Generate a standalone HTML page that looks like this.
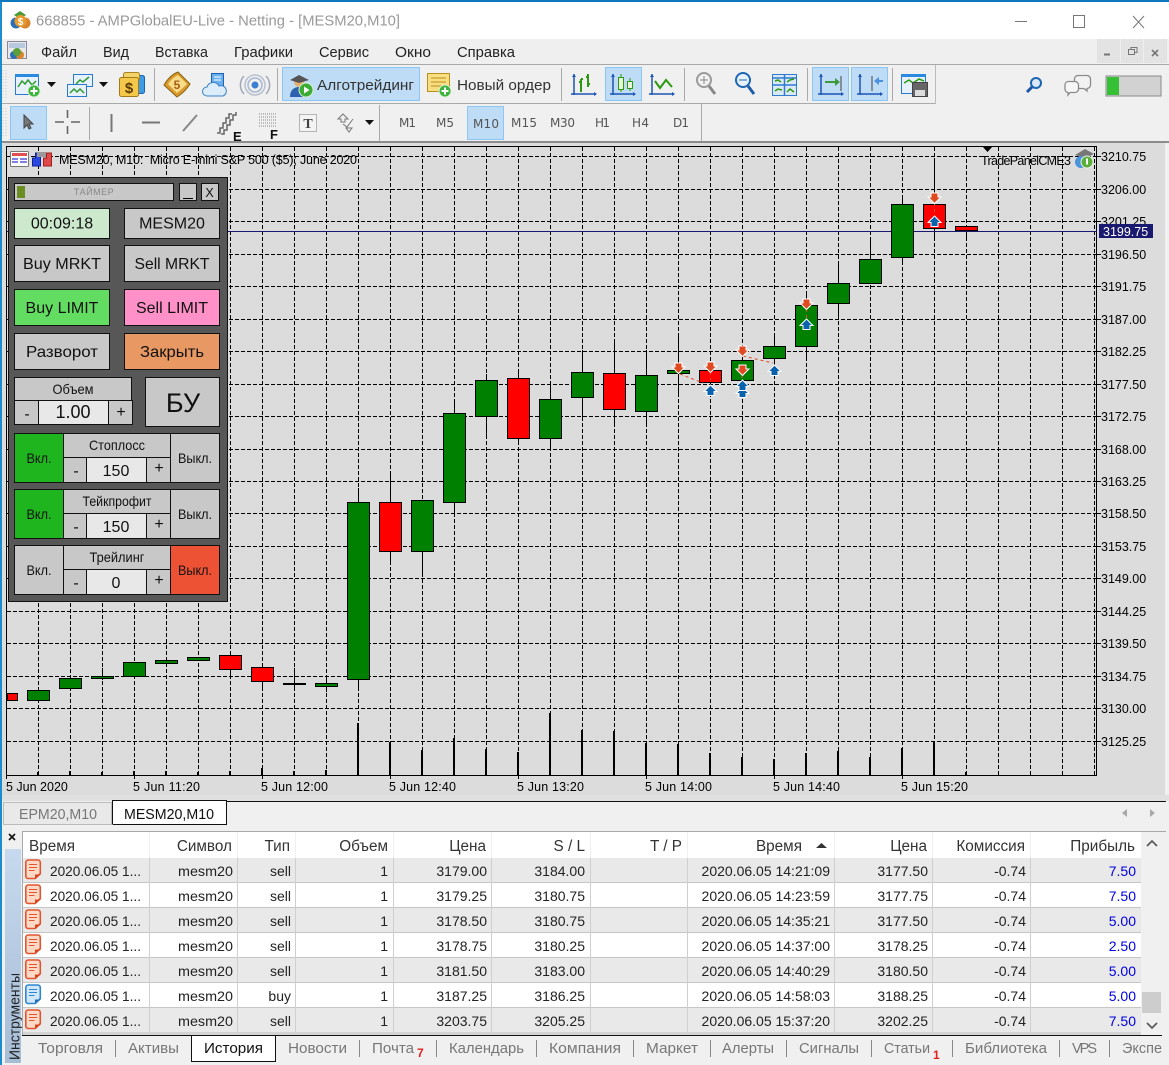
<!DOCTYPE html>
<html><head><meta charset="utf-8"><title>MetaTrader</title>
<style>
html,body{margin:0;padding:0;background:#f0f0f0}
svg{display:block;font-family:"Liberation Sans","Noto Sans CJK SC",sans-serif}
.m{font-size:15px;fill:#222}
.tb{font-size:15px;fill:#333}
.tf{font-family:"DejaVu Sans",sans-serif;font-size:12px;fill:#555}
.ax{font-size:12.5px;fill:#000}
.t{font-size:14px;fill:#222}
.e{text-anchor:end}
.b{fill:#0000e0}
.h{font-size:15.3px;fill:#333}
.bt{font-size:14.5px;fill:#777}
.c{text-anchor:middle;fill:#111}
.p16{font-size:16px}.p14{font-size:14px}
</style></head><body>
<svg width="1169" height="1065" viewBox="0 0 1169 1065" xmlns="http://www.w3.org/2000/svg">
<defs>
<linearGradient id="tool" x1="0" y1="0" x2="0" y2="1"><stop offset="0" stop-color="#c6d9ee"/><stop offset="1" stop-color="#a6bdd6"/></linearGradient>
<g id="ds"><path d="M.8 3.5a2.500 2.500 0 0 1 2.500-2.500h9.500a2.500 2.500 0 0 1 2.500 2.500v11l-5 5H3.300a2.500 2.500 0 0 1-2.500-2.500z" fill="#ffd9c6" stroke="#e0552f" stroke-width="1.600"/><path d="M4 5.500h8M4 8.500h8M4 11.500h5.500" stroke="#e0552f" fill="none"/><path d="M10 19.500v-4h6z" fill="#d8431d"/></g>
<g id="db"><path d="M.8 3.500a2.500 2.500 0 0 1 2.500-2.500h9.500a2.500 2.500 0 0 1 2.500 2.500v11l-5 5H3.300a2.500 2.500 0 0 1-2.500-2.500z" fill="#cfe6fb" stroke="#2f86d0" stroke-width="1.600"/><path d="M4 5.500h8M4 8.500h8M4 11.500h5.500" stroke="#2f86d0" fill="none"/><path d="M10 19.500v-4h6z" fill="#1d6fc0"/></g>
<path id="ad" d="M-3.500 0H3.500V4H6.500L0 10.500L-6.500 4H-3.500Z" fill="#e04a22" stroke="#fff"/>
<path id="au" d="M-3.500 10.500H3.500V6.500H6.500L0 0L-6.500 6.500H-3.500Z" fill="#0a62ad" stroke="#fff"/>
<g id="plus"><circle r="6" fill="#3cb43c" stroke="#d8f0d8"/><path d="M-3.500 0H3.500M0-3.500V3.500" stroke="#fff" stroke-width="2"/></g>
</defs>

<rect width="1169" height="1065" fill="#f0f0f0"/>
<rect y="2" width="1169" height="37" fill="#fff"/>
<rect width="1169" height="2" fill="#0f78bd"/>

<!-- title -->
<g transform="translate(11,11)"><circle cx="5" cy="12" r="5.500" fill="#2c6fb5"/><circle cx="14" cy="12" r="5.500" fill="#d8842c"/><path d="M3 4 9 0l6 4-6 4z" fill="#4a9a3c"/><circle cx="9.500" cy="10" r="6" fill="#e89a2c"/><text x="9.500" y="14" font-size="10" font-weight="bold" fill="#fff" text-anchor="middle">$</text></g>
<text x="36" y="25.500" font-size="15" fill="#999" textLength="364" lengthAdjust="spacingAndGlyphs">668855 - AMPGlobalEU-Live - Netting - [MESM20,M10]</text>
<path d="M1015 21.500H1027" stroke="#777"/>
<rect x="1073.500" y="15.500" width="11" height="12" fill="none" stroke="#777"/>
<path d="M1133 16L1144 28M1144 16L1133 28" stroke="#777"/>

<!-- menu -->
<rect y="39" width="1169" height="26" fill="#efefef"/>
<g transform="translate(7,41)"><rect x=".5" y=".5" width="19" height="17" fill="#e8e8e8" stroke="#889"/><rect x="2" y="2" width="16" height="5" fill="#b8c8e0"/><circle cx="7" cy="14" r="4" fill="#2c6fb5"/><circle cx="13" cy="14" r="4" fill="#d8842c"/><circle cx="10" cy="11" r="4" fill="#5aa03c"/></g>
<g class="m">
<text x="41" y="57" textLength="36" lengthAdjust="spacingAndGlyphs">Файл</text>
<text x="103" y="57" textLength="26" lengthAdjust="spacingAndGlyphs">Вид</text>
<text x="155" y="57" textLength="53" lengthAdjust="spacingAndGlyphs">Вставка</text>
<text x="234" y="57" textLength="59" lengthAdjust="spacingAndGlyphs">Графики</text>
<text x="319" y="57" textLength="50" lengthAdjust="spacingAndGlyphs">Сервис</text>
<text x="395" y="57" textLength="36" lengthAdjust="spacingAndGlyphs">Окно</text>
<text x="457" y="57" textLength="58" lengthAdjust="spacingAndGlyphs">Справка</text>
</g>
<rect x="1097" y="39" width="23" height="24" fill="#e3e3e3"/><rect x="1121" y="39" width="22" height="24" fill="#e3e3e3"/><rect x="1144" y="39" width="23" height="24" fill="#e3e3e3"/>
<path d="M1104 54.500h6" stroke="#777" stroke-width="2"/>
<path d="M1128.500 49.500h6v5h-6zM1131 49.500v-2h6v5h-2.500" fill="none" stroke="#777"/>
<path d="M1152 50l6 6M1158 50l-6 6" stroke="#777" stroke-width="1.600"/>
<rect y="64" width="1169" height="1" fill="#a8a8a8"/>

<!-- toolbar 1 -->
<rect y="103" width="935" height="1" fill="#aaa"/><rect x="935" y="65" width="1" height="39" fill="#bbb"/>
<path d="M3 70v30M6 70v30" stroke="#ccc" stroke-dasharray="1 2"/>
<g fill="#a9a9a9"><rect x="154" y="68" width="1" height="33"/><rect x="277" y="68" width="1" height="33"/><rect x="561" y="68" width="1" height="33"/><rect x="684" y="68" width="1" height="33"/><rect x="807" y="68" width="1" height="33"/><rect x="892" y="68" width="1" height="33"/></g>
<g fill="#bedcf5" stroke="#8cc6f4"><rect x="282.500" y="67.500" width="137" height="33"/><rect x="605.500" y="67.500" width="36" height="33"/><rect x="812.500" y="67.500" width="36" height="33"/><rect x="851.500" y="67.500" width="36" height="33"/></g>

<!-- new chart -->
<rect x="15.500" y="74.500" width="23" height="20" fill="#e6f1fb" stroke="#2a7bd0"/><rect x="15" y="74" width="24" height="3" fill="#2a8ae0"/>
<path d="M18 87l4-6 3 3 3-4 4 5 4-4" fill="none" stroke="#2f9a2f" stroke-width="1.500"/><use href="#plus" x="34" y="91"/>
<path d="M47 82h9l-4.500 5z" fill="#111"/>
<!-- profiles -->
<rect x="73.500" y="74.500" width="19" height="12" fill="#e6f1fb" stroke="#2a7bd0"/><rect x="67.500" y="84.500" width="19" height="12" fill="#e6f1fb" stroke="#2a7bd0"/>
<path d="M76 84l4-4 3 2 6-5M70 93l4-4 3 3 3-3 4 4" fill="none" stroke="#2f9a2f" stroke-width="1.500"/>
<path d="M99 82h9l-4.500 5z" fill="#111"/>
<!-- dollar -->
<rect x="127.500" y="75.500" width="17" height="18" rx="2" fill="#3d9be8" stroke="#1c64b0"/>
<rect x="123.500" y="72.500" width="16" height="8" rx="2" fill="#f4d26a" stroke="#a88420"/>
<rect x="119.500" y="77.500" width="19" height="19" rx="2" fill="#f6c84a" stroke="#a07a18"/>
<text x="129" y="93" font-size="15" font-weight="bold" fill="#5a3c00" text-anchor="middle">$</text>
<!-- book -->
<path d="M164 85Q170 75 178 72L190 84Q185 92 177 97Z" fill="#d89a2c" stroke="#8a6010"/><path d="M168 84Q172 78 178 75L187 84Q182 89 177 93Z" fill="#f7dc8a"/><text x="177" y="89" font-size="12" font-weight="bold" fill="#a85c10" text-anchor="middle">5</text>
<!-- cloud/book -->
<rect x="211.500" y="73.500" width="12" height="14" fill="#6ab0ee" stroke="#1c64b0"/><path d="M214 77h7M214 80h7" stroke="#fff"/>
<path d="M207 96a4.500 4.500 0 0 1 0-9 6.500 6.500 0 0 1 12-1 5 5 0 0 1 4 10z" fill="#dcecfa" stroke="#3a80c8"/>
<!-- signal -->
<circle cx="255" cy="85" r="3.500" fill="#3b7fd0"/><circle cx="255" cy="85" r="7" fill="none" stroke="#a8b8d0" stroke-width="1.500"/><circle cx="255" cy="85" r="10" fill="none" stroke="#b8c0d0" stroke-width="1.500"/><path d="M244 76a13 13 0 0 0 0 18M266 76a13 13 0 0 1 0 18" fill="none" stroke="#a0a8b8" stroke-width="1.500"/>
<!-- algo -->
<circle cx="299" cy="82" r="5" fill="#e4b070"/><path d="M290 80l9-5 10 5-10 3z" fill="#555"/><path d="M290 97c0-7 4-10 9-10 6 0 8 2 8 10z" fill="#2c62b0"/><circle cx="306" cy="90" r="7" fill="#3cac34" stroke="#d8f0d0"/><path d="M304 86.500v7l5.500-3.500z" fill="#fff"/>
<text x="317" y="90" class="tb" textLength="97" lengthAdjust="spacingAndGlyphs">Алготрейдинг</text>
<!-- new order -->
<rect x="427.500" y="73.500" width="22" height="18" fill="#f8de80" stroke="#b89020"/><path d="M431 78h15M431 82h15M431 86h10" stroke="#b89020"/><use href="#plus" x="445" y="91"/>
<text x="457" y="90" class="tb" textLength="94" lengthAdjust="spacingAndGlyphs">Новый ордер</text>
<!-- bars -->
<g fill="none" stroke="#1c55b5" stroke-width="1.500"><path d="M574 74v21M571 94h25"/></g><path d="M572 77l2-3 2 3zM594 92l3 2-3 2z" fill="#1c55b5"/>
<path d="M581 92v-13M579 82h2M581 79h2M588 87v-13M586 77h2M588 84h2" stroke="#2c9a10" stroke-width="2" fill="none"/>
<!-- candles icon -->
<g fill="none" stroke="#1c55b5" stroke-width="1.500"><path d="M613 74v21M610 94h25"/></g><path d="M611 77l2-3 2 3zM633 92l3 2-3 2z" fill="#1c55b5"/>
<path d="M621 74v18M630 78v13" stroke="#2c9a10"/><rect x="618.500" y="77.500" width="5" height="12" fill="#e8f5d8" stroke="#2c9a10"/><rect x="627.500" y="81.500" width="5" height="7" fill="#e8f5d8" stroke="#2c9a10"/>
<!-- line icon -->
<g fill="none" stroke="#1c55b5" stroke-width="1.500"><path d="M652 74v21M649 94h25"/></g><path d="M650 77l2-3 2 3zM672 92l3 2-3 2z" fill="#1c55b5"/>
<path d="M655 81l5 7 6-8 6 7" fill="none" stroke="#2c9a10" stroke-width="2"/>
<!-- zoom in -->
<circle cx="704" cy="80" r="7" fill="#f2f2f2" stroke="#9a9a9a" stroke-width="2"/><path d="M700 80h8M704 76v8" stroke="#888"/><path d="M709 86l6 8" stroke="#888" stroke-width="3"/>
<!-- zoom out -->
<circle cx="743" cy="80" r="7" fill="#e8f2fa" stroke="#1f66b5" stroke-width="2"/><path d="M739 80h8" stroke="#1f66b5"/><path d="M748 86l6 8" stroke="#1f5ca8" stroke-width="3"/>
<!-- tile -->
<rect x="772.500" y="74.500" width="24" height="21" fill="#dbe9f6" stroke="#2f7bd0"/><path d="M772 78h25M772 85h25M784.500 74v22" stroke="#2f7bd0" stroke-width="1.500"/>
<path d="M775 81l3-1 3 2M787 82l3-2 4-1M775 91l3-2 4 1M787 92l3-3 4 3" fill="none" stroke="#2c9a10" stroke-width="1.500"/>
<!-- shift -->
<g fill="none" stroke="#1c55b5" stroke-width="1.500"><path d="M821 74v21M818 94h25"/></g><path d="M819 77l2-3 2 3zM841 92l3 2-3 2z" fill="#1c55b5"/><path d="M841 76v15" stroke="#444"/><path d="M825 81h10v-3l5 4-5 4v-3h-10z" fill="#3c9a3c"/>
<g fill="none" stroke="#1c55b5" stroke-width="1.500"><path d="M860 74v21M857 94h25"/></g><path d="M858 77l2-3 2 3zM880 92l3 2-3 2z" fill="#1c55b5"/><path d="M872 76v15" stroke="#444"/><path d="M883 80h-4v-3l-5 4 5 4v-3h4z" fill="#4a90e0"/>
<!-- template -->
<rect x="901.500" y="74.500" width="24" height="19" fill="#e6f1fb" stroke="#2a7bd0"/><rect x="901" y="74" width="25" height="3" fill="#2a8ae0"/><path d="M904 83l5-3 4 3 6-4 5 2" fill="none" stroke="#2c9a10" stroke-width="1.500"/>
<rect x="912.500" y="82.500" width="15" height="14" fill="#666" stroke="#444"/><rect x="915" y="90" width="10" height="6" fill="#ddd"/>
<!-- right icons -->
<circle cx="1036" cy="83" r="5" fill="#d8e8f8" stroke="#1c64b0" stroke-width="2"/><path d="M1032 87l-5 5" stroke="#1c55a8" stroke-width="3"/>
<path d="M1078 75.500h9a3.500 3.500 0 0 1 3.500 3.500v6a3.500 3.500 0 0 1-3.500 3.500v2.500l-3-2.500h-6a3.500 3.500 0 0 1-3.500-3.500v-6a3.500 3.500 0 0 1 3.500-3.500z" fill="#f2f2f2" stroke="#8a8a8a" stroke-width="1.300"/>
<path d="M1068 81.500h7a3.500 3.500 0 0 1 3.500 3.500v4a3.500 3.500 0 0 1-3.500 3.500h-5l-2 2.500v-2.500a3.500 3.500 0 0 1-3-3.500v-4a3.500 3.500 0 0 1 3-3.500z" fill="#f6f6f6" stroke="#8a8a8a" stroke-width="1.300"/>
<rect x="1106" y="76" width="55" height="20" fill="#d2d2d2" stroke="#8a8a8a"/><rect x="1107" y="77" width="12" height="18" fill="#36c036"/>

<!-- toolbar 2 -->
<rect x="701" y="104" width="1" height="38" fill="#aaa"/>
<path d="M3 108v30M6 108v30" stroke="#ccc" stroke-dasharray="1 2"/>
<rect x="379" y="105" width="1" height="36" fill="#aaa"/><rect x="89" y="107" width="1" height="33" fill="#a9a9a9"/>
<g fill="#bedcf5" stroke="#8cc6f4"><rect x="10.500" y="106.500" width="36" height="33"/><rect x="467.500" y="106.500" width="36" height="33"/></g>
<path d="M24 115v13l3-3 2 4 2-1-2-4h4z" fill="#777" stroke="#444"/>
<path d="M55 122h9M71 122h9M67.500 110v8M67.500 126v8" stroke="#666" stroke-width="1.600"/>
<path d="M111.500 114v18" stroke="#777" stroke-width="2"/>
<path d="M142 122.500h18" stroke="#777" stroke-width="2"/>
<path d="M183 131l14-16" stroke="#888" stroke-width="2"/>
<path d="M217 133h3v-5h3v-5h3v-5h3v-4h3M221 134h3v-4h3v-5h3v-5h3v-5h3v-3" fill="none" stroke="#666" stroke-width="1.500"/><text x="233" y="141" font-size="13" font-weight="bold" fill="#111">E</text>
<path d="M259 114h18M259 117h18M259 120h18M259 123h18M259 126h18" stroke="#888" stroke-dasharray="1 1"/><text x="270" y="139" font-size="13" font-weight="bold" fill="#111">F</text>
<rect x="299.500" y="114.500" width="17" height="17" fill="#f4f4f4" stroke="#777" stroke-dasharray="1 1"/><text x="308" y="128" font-size="14" font-weight="bold" fill="#444" text-anchor="middle" font-family="Liberation Serif">T</text>
<path d="M338 119l5-5 5 5-3 0v3h-4v-3zM343 124l4 3 6-8" fill="none" stroke="#777"/><path d="M346 128h6l-3 4z" fill="none" stroke="#777"/>
<path d="M365 120h9l-4.500 5z" fill="#111"/>
<g class="tf"><text x="399" y="127" textLength="17">M1</text><text x="436" y="127" textLength="18">M5</text><text x="473" y="128" textLength="26">M10</text><text x="511" y="127" textLength="26">M15</text><text x="550" y="127" textLength="25">M30</text><text x="595" y="127" textLength="15">H1</text><text x="632" y="127" textLength="17">H4</text><text x="673" y="127" textLength="16">D1</text></g>

<!-- chart -->
<rect x="2" y="142" width="1163" height="653" fill="#dcdcdc"/>
<rect x="0" y="141" width="1169" height="2" fill="#8c8c8c"/>
<rect x="0" width="2" y="2" height="1063" fill="#1b8ccd"/>
<path fill="none" stroke="#000" stroke-dasharray="4 2" d="M38.500 147V775M70.500 147V775M102.500 147V775M134.500 147V775M166.500 147V775M198.500 147V775M230.500 147V775M262.500 147V775M294.500 147V775M326.500 147V775M358.500 147V775M390.500 147V775M422.500 147V775M454.500 147V775M486.500 147V775M518.500 147V775M550.500 147V775M582.500 147V775M614.500 147V775M646.500 147V775M678.500 147V775M710.500 147V775M742.500 147V775M774.500 147V775M806.500 147V775M838.500 147V775M870.500 147V775M902.500 147V775M934.500 147V775M966.500 147V775M998.500 147V775M1030.500 147V775M1062.500 147V775M1094.500 147V775"/>
<path fill="none" stroke="#000" stroke-dasharray="4 2" d="M7 156.500H1096M7 189.500H1096M7 221.500H1096M7 254.500H1096M7 286.500H1096M7 319.500H1096M7 351.500H1096M7 384.500H1096M7 416.500H1096M7 449.500H1096M7 481.500H1096M7 513.500H1096M7 546.500H1096M7 578.500H1096M7 611.500H1096M7 643.500H1096M7 676.500H1096M7 708.500H1096M7 741.500H1096"/>
<rect x="6.500" y="146.500" width="1090" height="629" fill="none" stroke="#000"/>
<path stroke="#000" d="M1097 156.500h4M1097 189.500h4M1097 221.500h4M1097 254.500h4M1097 286.500h4M1097 319.500h4M1097 351.500h4M1097 384.500h4M1097 416.500h4M1097 449.500h4M1097 481.500h4M1097 513.500h4M1097 546.500h4M1097 578.500h4M1097 611.500h4M1097 643.500h4M1097 676.500h4M1097 708.500h4M1097 741.500h4"/>
<path stroke="#000" d="M6.500 775v4M134.500 775v4M262.500 775v4M390.500 775v4M518.500 775v4M646.500 775v4M774.500 775v4M902.500 775v4"/>
<!-- volumes -->
<path stroke="#000" stroke-width="2" d="M38 775V772M70 775V771M102 775V772M134 775V771M166 775V771M198 775V772M230 775V771M262 775V768M294 775V771M326 775V770M358 775V723M390 775V742M422 775V750M454 775V738M486 775V749M518 775V752M550 775V713M582 775V730M614 775V731M646 775V743M678 775V744M710 775V753M742 775V757M774 775V759M806 775V753M838 775V751M870 775V757M902 775V748M934 775V742M966 775V772"/>
<!-- wicks -->
<path stroke="#000" d="M102.500 668V680M230.500 669V677M262.500 681V690M294.500 668V688M326.500 675V692M358.500 488V690M390.500 474V565M422.500 500V574M454.500 402V513M486.500 374V439M518.500 373V444M550.500 385V448M582.500 350V418M614.500 343V424M646.500 350V424M678.500 337V397M710.500 362V386M742.500 345V385M774.500 337V364M806.500 295V358M838.500 262V315M870.500 240V284M902.500 195V262M934.500 158V238M966.500 226V240"/>
<!-- nav line -->
<rect x="7" y="231" width="1090" height="1" fill="#191970"/>
<!-- candles -->
<g stroke="#000" fill="#008000">
<rect x="27.500" y="690.500" width="22" height="10"/><rect x="59.500" y="678.500" width="22" height="10"/><rect x="91.500" y="676.500" width="22" height="2"/><rect x="123.500" y="662.500" width="22" height="14"/><rect x="155.500" y="660.500" width="22" height="3"/><rect x="187.500" y="657.500" width="22" height="3"/><rect x="315.500" y="683.500" width="22" height="3"/>
<rect x="347.500" y="502.500" width="22" height="177"/><rect x="411.500" y="500.500" width="22" height="51"/><rect x="443.500" y="413.500" width="22" height="89"/><rect x="475.500" y="380.500" width="22" height="36"/><rect x="539.500" y="399.500" width="22" height="39"/><rect x="571.500" y="372.500" width="22" height="25"/><rect x="635.500" y="375.500" width="22" height="36"/>
<rect x="667.500" y="370.500" width="22" height="3"/><rect x="731.500" y="360.500" width="22" height="20"/><rect x="763.500" y="346.500" width="22" height="12"/><rect x="795.500" y="305.500" width="22" height="41"/><rect x="827.500" y="283.500" width="22" height="20"/><rect x="859.500" y="259.500" width="22" height="24"/><rect x="891.500" y="204.500" width="22" height="53"/>
</g>
<g stroke="#000" fill="#f00">
<rect x="7.500" y="693.500" width="10" height="7"/><rect x="219.500" y="655.500" width="22" height="14"/><rect x="251.500" y="667.500" width="22" height="14"/>
<rect x="379.500" y="502.500" width="22" height="49"/><rect x="507.500" y="378.500" width="22" height="60"/><rect x="603.500" y="373.500" width="22" height="36"/><rect x="699.500" y="370.500" width="22" height="12"/><rect x="923.500" y="204.500" width="22" height="24"/><rect x="955.500" y="226.500" width="22" height="4"/>
</g>
<rect x="283" y="683" width="23" height="2" fill="#000"/>
<!-- trade lines -->
<path d="M680 374L703 383M743 356L773 363M742 375V390M934.500 203V215M806.500 309V318M710.500 372V384" stroke="#e04a22" stroke-dasharray="3 3" fill="none"/>
<!-- arrows -->
<use href="#ad" x="678.500" y="363"/><use href="#ad" x="710.500" y="362"/><use href="#ad" x="742.500" y="346"/><use href="#ad" x="742.500" y="365"/><use href="#ad" x="806.500" y="299"/><use href="#ad" x="934.500" y="193"/>
<use href="#au" x="710.500" y="385"/><use href="#au" x="742.500" y="387"/><use href="#au" x="742.500" y="380"/><use href="#au" x="774.500" y="365"/><use href="#au" x="806.500" y="319"/><use href="#au" x="934.500" y="216"/>
<!-- chart labels -->
<g class="ax">
<text x="1101" y="161">3210.75</text><text x="1101" y="194">3206.00</text><text x="1101" y="226">3201.25</text><text x="1101" y="259">3196.50</text><text x="1101" y="291">3191.75</text><text x="1101" y="324">3187.00</text><text x="1101" y="356">3182.25</text><text x="1101" y="389">3177.50</text><text x="1101" y="421">3172.75</text><text x="1101" y="454">3168.00</text><text x="1101" y="486">3163.25</text><text x="1101" y="518">3158.50</text><text x="1101" y="551">3153.75</text><text x="1101" y="583">3149.00</text><text x="1101" y="616">3144.25</text><text x="1101" y="648">3139.50</text><text x="1101" y="681">3134.75</text><text x="1101" y="713">3130.00</text><text x="1101" y="746">3125.25</text>
<text x="6" y="791">5 Jun 2020</text><text x="133" y="791" textLength="67">5 Jun 11:20</text><text x="261" y="791" textLength="67">5 Jun 12:00</text><text x="389" y="791" textLength="67">5 Jun 12:40</text><text x="517" y="791" textLength="67">5 Jun 13:20</text><text x="645" y="791" textLength="67">5 Jun 14:00</text><text x="773" y="791" textLength="67">5 Jun 14:40</text><text x="901" y="791" textLength="67">5 Jun 15:20</text>
<text x="59" y="164" textLength="298">MESM20, M10:&#160;&#160;Micro E-mini S&amp;P 500 ($5); June 2020</text>
<text x="981" y="165" textLength="90">TradePanelCME3</text>
</g>
<rect x="1099" y="224" width="54" height="14" fill="#191970"/>
<text x="1103" y="236" font-size="12.500" fill="#fff">3199.75</text>
<path d="M982 146h11l-5.500 6z" fill="#000"/>
<!-- chart top icons -->
<rect x="10.500" y="151.500" width="18" height="15" rx="1" fill="#fff" stroke="#777"/><rect x="12" y="153" width="15" height="3" fill="#e05050"/><path d="M12 159h6M12 162h6M20 159h7M20 162h7" stroke="#8080e0" stroke-width="2"/>
<path d="M32.500 158h3v-5h5v13h-8z" fill="#2848e0" stroke="#1020a0"/><path d="M43.500 158h3v-5h5v13h-8z" fill="#e04848" stroke="#a02020"/><rect x="37" y="152" width="9" height="5" fill="#999"/>
<path d="M1075 155l10-6 9 5-9 4z" fill="#777"/><circle cx="1081" cy="162" r="6" fill="#4a94dc"/><circle cx="1087" cy="162" r="6" fill="#58b038" stroke="#eee"/><path d="M1087 158.500v6" stroke="#fff" stroke-width="2"/>

<!-- panel -->
<rect x="8.500" y="177.500" width="219" height="424" fill="#575757" stroke="#111"/>
<g stroke="#111" fill="#c8c8c8">
<rect x="14.500" y="183.500" width="159" height="17"/><rect x="179.500" y="183.500" width="17" height="17"/><rect x="201.500" y="183.500" width="17" height="17"/>
<rect x="14.500" y="208.500" width="95" height="30" fill="#cde9cd"/><rect x="124.500" y="208.500" width="95" height="30"/>
<rect x="14.500" y="245.500" width="95" height="36"/><rect x="124.500" y="245.500" width="95" height="36"/>
<rect x="14.500" y="289.500" width="95" height="36" fill="#62dd62"/><rect x="124.500" y="289.500" width="95" height="36" fill="#ff90c8"/>
<rect x="14.500" y="333.500" width="95" height="36"/><rect x="124.500" y="333.500" width="95" height="36" fill="#e89862"/>
<rect x="14.500" y="377.500" width="117" height="23"/><rect x="14.500" y="400.500" width="24" height="24"/><rect x="38.500" y="400.500" width="70" height="24" fill="#e8e8e8"/><rect x="108.500" y="400.500" width="24" height="24"/>
<rect x="145.500" y="377.500" width="74" height="49"/>
<rect x="14.500" y="433.500" width="49" height="49" fill="#1eb51e"/><rect x="63.500" y="433.500" width="107" height="24"/><rect x="63.500" y="457.500" width="23" height="25"/><rect x="86.500" y="457.500" width="60" height="25" fill="#e8e8e8"/><rect x="146.500" y="457.500" width="24" height="25"/><rect x="170.500" y="433.500" width="49" height="49"/>
<rect x="14.500" y="489.500" width="49" height="49" fill="#1eb51e"/><rect x="63.500" y="489.500" width="107" height="24"/><rect x="63.500" y="513.500" width="23" height="25"/><rect x="86.500" y="513.500" width="60" height="25" fill="#e8e8e8"/><rect x="146.500" y="513.500" width="24" height="25"/><rect x="170.500" y="489.500" width="49" height="49"/>
<rect x="14.500" y="545.500" width="49" height="49"/><rect x="63.500" y="545.500" width="107" height="24"/><rect x="63.500" y="569.500" width="23" height="25"/><rect x="86.500" y="569.500" width="60" height="25" fill="#e8e8e8"/><rect x="146.500" y="569.500" width="24" height="25"/><rect x="170.500" y="545.500" width="49" height="49" fill="#ee5234"/>
</g>
<rect x="17" y="186" width="8" height="12" fill="#6b8e23"/>
<text x="94" y="195" font-size="9" fill="#888" text-anchor="middle" letter-spacing=".5">ТАЙМЕР</text>
<rect x="183" y="198" width="10" height="1" fill="#000"/>
<text x="209.500" y="197" font-size="12.500" class="c">X</text>
<g class="c p16">
<text x="62" y="228.500" font-size="16">00:09:18</text><text x="172" y="228.500">MESM20</text>
<text x="62" y="269" textLength="78" lengthAdjust="spacingAndGlyphs">Buy MRKT</text><text x="172" y="269" textLength="75" lengthAdjust="spacingAndGlyphs">Sell MRKT</text>
<text x="62" y="313">Buy LIMIT</text><text x="172" y="313">Sell LIMIT</text>
<text x="62" y="357" textLength="72" lengthAdjust="spacingAndGlyphs">Разворот</text><text x="172" y="357" textLength="64" lengthAdjust="spacingAndGlyphs">Закрыть</text>
<text x="116" y="476">150</text><text x="116" y="532">150</text><text x="116" y="588">0</text>
<text x="159" y="473">+</text><text x="159" y="529">+</text><text x="159" y="585">+</text><text x="76" y="476">-</text><text x="76" y="532">-</text><text x="76" y="588">-</text>
<text x="121" y="417">+</text><text x="27" y="419">-</text>
</g>
<g class="c p14">
<text x="73" y="394" textLength="41" lengthAdjust="spacingAndGlyphs">Объем</text>
<text x="117" y="450" textLength="56" lengthAdjust="spacingAndGlyphs">Стоплосс</text><text x="117" y="506" textLength="69" lengthAdjust="spacingAndGlyphs">Тейкпрофит</text><text x="117" y="562" textLength="55" lengthAdjust="spacingAndGlyphs">Трейлинг</text>
<text x="39" y="463" textLength="25" lengthAdjust="spacingAndGlyphs">Вкл.</text><text x="39" y="519" textLength="25" lengthAdjust="spacingAndGlyphs">Вкл.</text><text x="39" y="575" textLength="25" lengthAdjust="spacingAndGlyphs">Вкл.</text>
<text x="195" y="463" textLength="34" lengthAdjust="spacingAndGlyphs">Выкл.</text><text x="195" y="519" textLength="34" lengthAdjust="spacingAndGlyphs">Выкл.</text><text x="195" y="575" textLength="34" lengthAdjust="spacingAndGlyphs">Выкл.</text>
</g>
<text x="73" y="418" font-size="18" class="c">1.00</text>
<text x="183" y="412" font-size="27" class="c">БУ</text>

<!-- chart tabs -->
<rect x="0" y="795" width="1169" height="6" fill="#e0e0e0"/><rect x="0" width="2" y="795" height="270" fill="#1b8ccd"/>
<rect x="2" y="801" width="1167" height="264" fill="#f0f0f0"/>
<rect x="226" y="801" width="940" height="1" fill="#111"/>
<rect x="3.500" y="802.500" width="108" height="22" fill="#e9e9e9" stroke="#bbb"/>
<path d="M112.500 824V800.500H226.500V824.500H112.500" fill="#fff" stroke="#111"/>
<text x="19" y="819" font-size="14.500" fill="#777" textLength="78" lengthAdjust="spacingAndGlyphs">EPM20,M10</text>
<text x="124" y="819" font-size="14.500" fill="#111" textLength="90" lengthAdjust="spacingAndGlyphs">MESM20,M10</text>
<path d="M1127 809l-5 4 5 4zM1150 809l5 4-5 4z" fill="#a8a8a8"/>

<!-- left tool strip -->
<path d="M9 834l6 6M15 834l-6 6" stroke="#111" stroke-width="1.600"/>
<rect x="5" y="849" width="16" height="214" fill="url(#tool)"/>
<text transform="translate(19.500,1060) rotate(-90)" font-size="14.500" fill="#222" textLength="87" lengthAdjust="spacingAndGlyphs">Инструменты</text>

<!-- table -->
<rect x="22" y="831" width="1119" height="203" fill="#fff"/>
<rect x="22" y="831" width="1144" height="1" fill="#a8a8a8"/><rect x="22" y="831" width="1" height="204" fill="#a8a8a8"/>
<g fill="#e9e9e9"><rect x="23" y="858" width="1118" height="24"/><rect x="23" y="908" width="1118" height="24"/><rect x="23" y="958" width="1118" height="24"/><rect x="23" y="1008" width="1118" height="24"/></g>
<g fill="#c6c6c6"><rect x="23" y="882" width="1118" height="1"/><rect x="23" y="907" width="1118" height="1"/><rect x="23" y="932" width="1118" height="1"/><rect x="23" y="957" width="1118" height="1"/><rect x="23" y="982" width="1118" height="1"/><rect x="23" y="1007" width="1118" height="1"/></g>
<g fill="#cfcfcf"><rect x="149" y="858" width="1" height="175"/><rect x="237" y="858" width="1" height="175"/><rect x="295" y="858" width="1" height="175"/><rect x="393" y="858" width="1" height="175"/><rect x="491" y="858" width="1" height="175"/><rect x="590" y="858" width="1" height="175"/><rect x="687" y="858" width="1" height="175"/><rect x="834" y="858" width="1" height="175"/><rect x="932" y="858" width="1" height="175"/><rect x="1030" y="858" width="1" height="175"/></g>
<g fill="#f0f0f0"><rect x="149" y="832" width="1" height="26"/><rect x="237" y="832" width="1" height="26"/><rect x="295" y="832" width="1" height="26"/><rect x="393" y="832" width="1" height="26"/><rect x="491" y="832" width="1" height="26"/><rect x="590" y="832" width="1" height="26"/><rect x="687" y="832" width="1" height="26"/><rect x="834" y="832" width="1" height="26"/><rect x="932" y="832" width="1" height="26"/><rect x="1030" y="832" width="1" height="26"/></g>
<rect x="23" y="1032" width="1118" height="3" fill="#d4d4d4"/>
<g class="h">
<text x="29" y="851">Время</text><text x="232" y="851" class="e">Символ</text><text x="290" y="851" class="e">Тип</text><text x="388" y="851" class="e">Объем</text><text x="486" y="851" class="e">Цена</text><text x="585" y="851" class="e">S / L</text><text x="682" y="851" class="e">T / P</text><text x="802" y="851" class="e">Время</text><text x="927" y="851" class="e">Цена</text><text x="1025" y="851" class="e">Комиссия</text><text x="1135" y="851" class="e">Прибыль</text>
</g>
<path d="M816 848l5.500-5 5.500 5z" fill="#333"/>
<use href="#ds" x="25" y="859"/><use href="#ds" x="25" y="884"/><use href="#ds" x="25" y="909"/><use href="#ds" x="25" y="934"/><use href="#ds" x="25" y="959"/><use href="#db" x="25" y="984"/><use href="#ds" x="25" y="1009"/>
<g class="t">
<text x="50" y="876" textLength="91" lengthAdjust="spacingAndGlyphs">2020.06.05 1...</text><text x="178" y="876" textLength="55" lengthAdjust="spacingAndGlyphs">mesm20</text><text x="291" y="876" class="e">sell</text><text x="388" y="876" class="e">1</text><text x="487" y="876" class="e">3179.00</text><text x="585" y="876" class="e">3184.00</text><text x="830" y="876" class="e">2020.06.05 14:21:09</text><text x="928" y="876" class="e">3177.50</text><text x="1026" y="876" class="e">-0.74</text><text x="1136" y="876" class="e b">7.50</text>
<text x="50" y="901" textLength="91" lengthAdjust="spacingAndGlyphs">2020.06.05 1...</text><text x="178" y="901" textLength="55" lengthAdjust="spacingAndGlyphs">mesm20</text><text x="291" y="901" class="e">sell</text><text x="388" y="901" class="e">1</text><text x="487" y="901" class="e">3179.25</text><text x="585" y="901" class="e">3180.75</text><text x="830" y="901" class="e">2020.06.05 14:23:59</text><text x="928" y="901" class="e">3177.75</text><text x="1026" y="901" class="e">-0.74</text><text x="1136" y="901" class="e b">7.50</text>
<text x="50" y="926" textLength="91" lengthAdjust="spacingAndGlyphs">2020.06.05 1...</text><text x="178" y="926" textLength="55" lengthAdjust="spacingAndGlyphs">mesm20</text><text x="291" y="926" class="e">sell</text><text x="388" y="926" class="e">1</text><text x="487" y="926" class="e">3178.50</text><text x="585" y="926" class="e">3180.75</text><text x="830" y="926" class="e">2020.06.05 14:35:21</text><text x="928" y="926" class="e">3177.50</text><text x="1026" y="926" class="e">-0.74</text><text x="1136" y="926" class="e b">5.00</text>
<text x="50" y="951" textLength="91" lengthAdjust="spacingAndGlyphs">2020.06.05 1...</text><text x="178" y="951" textLength="55" lengthAdjust="spacingAndGlyphs">mesm20</text><text x="291" y="951" class="e">sell</text><text x="388" y="951" class="e">1</text><text x="487" y="951" class="e">3178.75</text><text x="585" y="951" class="e">3180.25</text><text x="830" y="951" class="e">2020.06.05 14:37:00</text><text x="928" y="951" class="e">3178.25</text><text x="1026" y="951" class="e">-0.74</text><text x="1136" y="951" class="e b">2.50</text>
<text x="50" y="976" textLength="91" lengthAdjust="spacingAndGlyphs">2020.06.05 1...</text><text x="178" y="976" textLength="55" lengthAdjust="spacingAndGlyphs">mesm20</text><text x="291" y="976" class="e">sell</text><text x="388" y="976" class="e">1</text><text x="487" y="976" class="e">3181.50</text><text x="585" y="976" class="e">3183.00</text><text x="830" y="976" class="e">2020.06.05 14:40:29</text><text x="928" y="976" class="e">3180.50</text><text x="1026" y="976" class="e">-0.74</text><text x="1136" y="976" class="e b">5.00</text>
<text x="50" y="1001" textLength="91" lengthAdjust="spacingAndGlyphs">2020.06.05 1...</text><text x="178" y="1001" textLength="55" lengthAdjust="spacingAndGlyphs">mesm20</text><text x="291" y="1001" class="e">buy</text><text x="388" y="1001" class="e">1</text><text x="487" y="1001" class="e">3187.25</text><text x="585" y="1001" class="e">3186.25</text><text x="830" y="1001" class="e">2020.06.05 14:58:03</text><text x="928" y="1001" class="e">3188.25</text><text x="1026" y="1001" class="e">-0.74</text><text x="1136" y="1001" class="e b">5.00</text>
<text x="50" y="1026" textLength="91" lengthAdjust="spacingAndGlyphs">2020.06.05 1...</text><text x="178" y="1026" textLength="55" lengthAdjust="spacingAndGlyphs">mesm20</text><text x="291" y="1026" class="e">sell</text><text x="388" y="1026" class="e">1</text><text x="487" y="1026" class="e">3203.75</text><text x="585" y="1026" class="e">3205.25</text><text x="830" y="1026" class="e">2020.06.05 15:37:20</text><text x="928" y="1026" class="e">3202.25</text><text x="1026" y="1026" class="e">-0.74</text><text x="1136" y="1026" class="e b">7.50</text>
</g>
<!-- scrollbar -->
<rect x="1142" y="992" width="19" height="21" fill="#cdcdcd"/>
<path d="M1147 846l5-5 5 5M1147 1023l5 5 5-5" fill="none" stroke="#555" stroke-width="1.600"/>

<!-- bottom tabs -->
<rect x="22" y="1035" width="1140" height="1" fill="#111"/>
<rect x="192" y="1035" width="83" height="26" fill="#fff"/>
<path d="M191.500 1035V1061.500H275.500V1035" fill="none" stroke="#111"/>
<rect x="191.500" y="1035" width="84" height="1" fill="#111"/>
<g class="bt">
<text x="38" y="1053" textLength="65" lengthAdjust="spacingAndGlyphs">Торговля</text>
<text x="128" y="1053" textLength="51" lengthAdjust="spacingAndGlyphs">Активы</text>
<text x="204" y="1053" textLength="59" lengthAdjust="spacingAndGlyphs" style="fill:#111">История</text>
<text x="288" y="1053" textLength="59" lengthAdjust="spacingAndGlyphs">Новости</text>
<text x="372" y="1053" textLength="42" lengthAdjust="spacingAndGlyphs">Почта</text>
<text x="449" y="1053" textLength="75" lengthAdjust="spacingAndGlyphs">Календарь</text>
<text x="549" y="1053" textLength="72" lengthAdjust="spacingAndGlyphs">Компания</text>
<text x="646" y="1053" textLength="52" lengthAdjust="spacingAndGlyphs">Маркет</text>
<text x="722" y="1053" textLength="52" lengthAdjust="spacingAndGlyphs">Алерты</text>
<text x="799" y="1053" textLength="60" lengthAdjust="spacingAndGlyphs">Сигналы</text>
<text x="884" y="1053" textLength="46" lengthAdjust="spacingAndGlyphs">Статьи</text>
<text x="965" y="1053" textLength="82" lengthAdjust="spacingAndGlyphs">Библиотека</text>
<text x="1072" y="1053" textLength="25" lengthAdjust="spacing">VPS</text>
<text x="1122" y="1053" textLength="40" lengthAdjust="spacingAndGlyphs">Экспе</text>
</g>
<text x="417" y="1057" font-size="12" font-weight="bold" fill="#e02020">7</text>
<text x="933" y="1059" font-size="12" font-weight="bold" fill="#e02020">1</text>
<path stroke="#888" d="M115.500 1040v17M359.500 1040v17M436.500 1040v17M536.500 1040v17M633.500 1040v17M710.500 1040v17M786.500 1040v17M871.500 1040v17M952.500 1040v17M1059.500 1040v17M1109.500 1040v17"/>
</svg>
</body></html>
